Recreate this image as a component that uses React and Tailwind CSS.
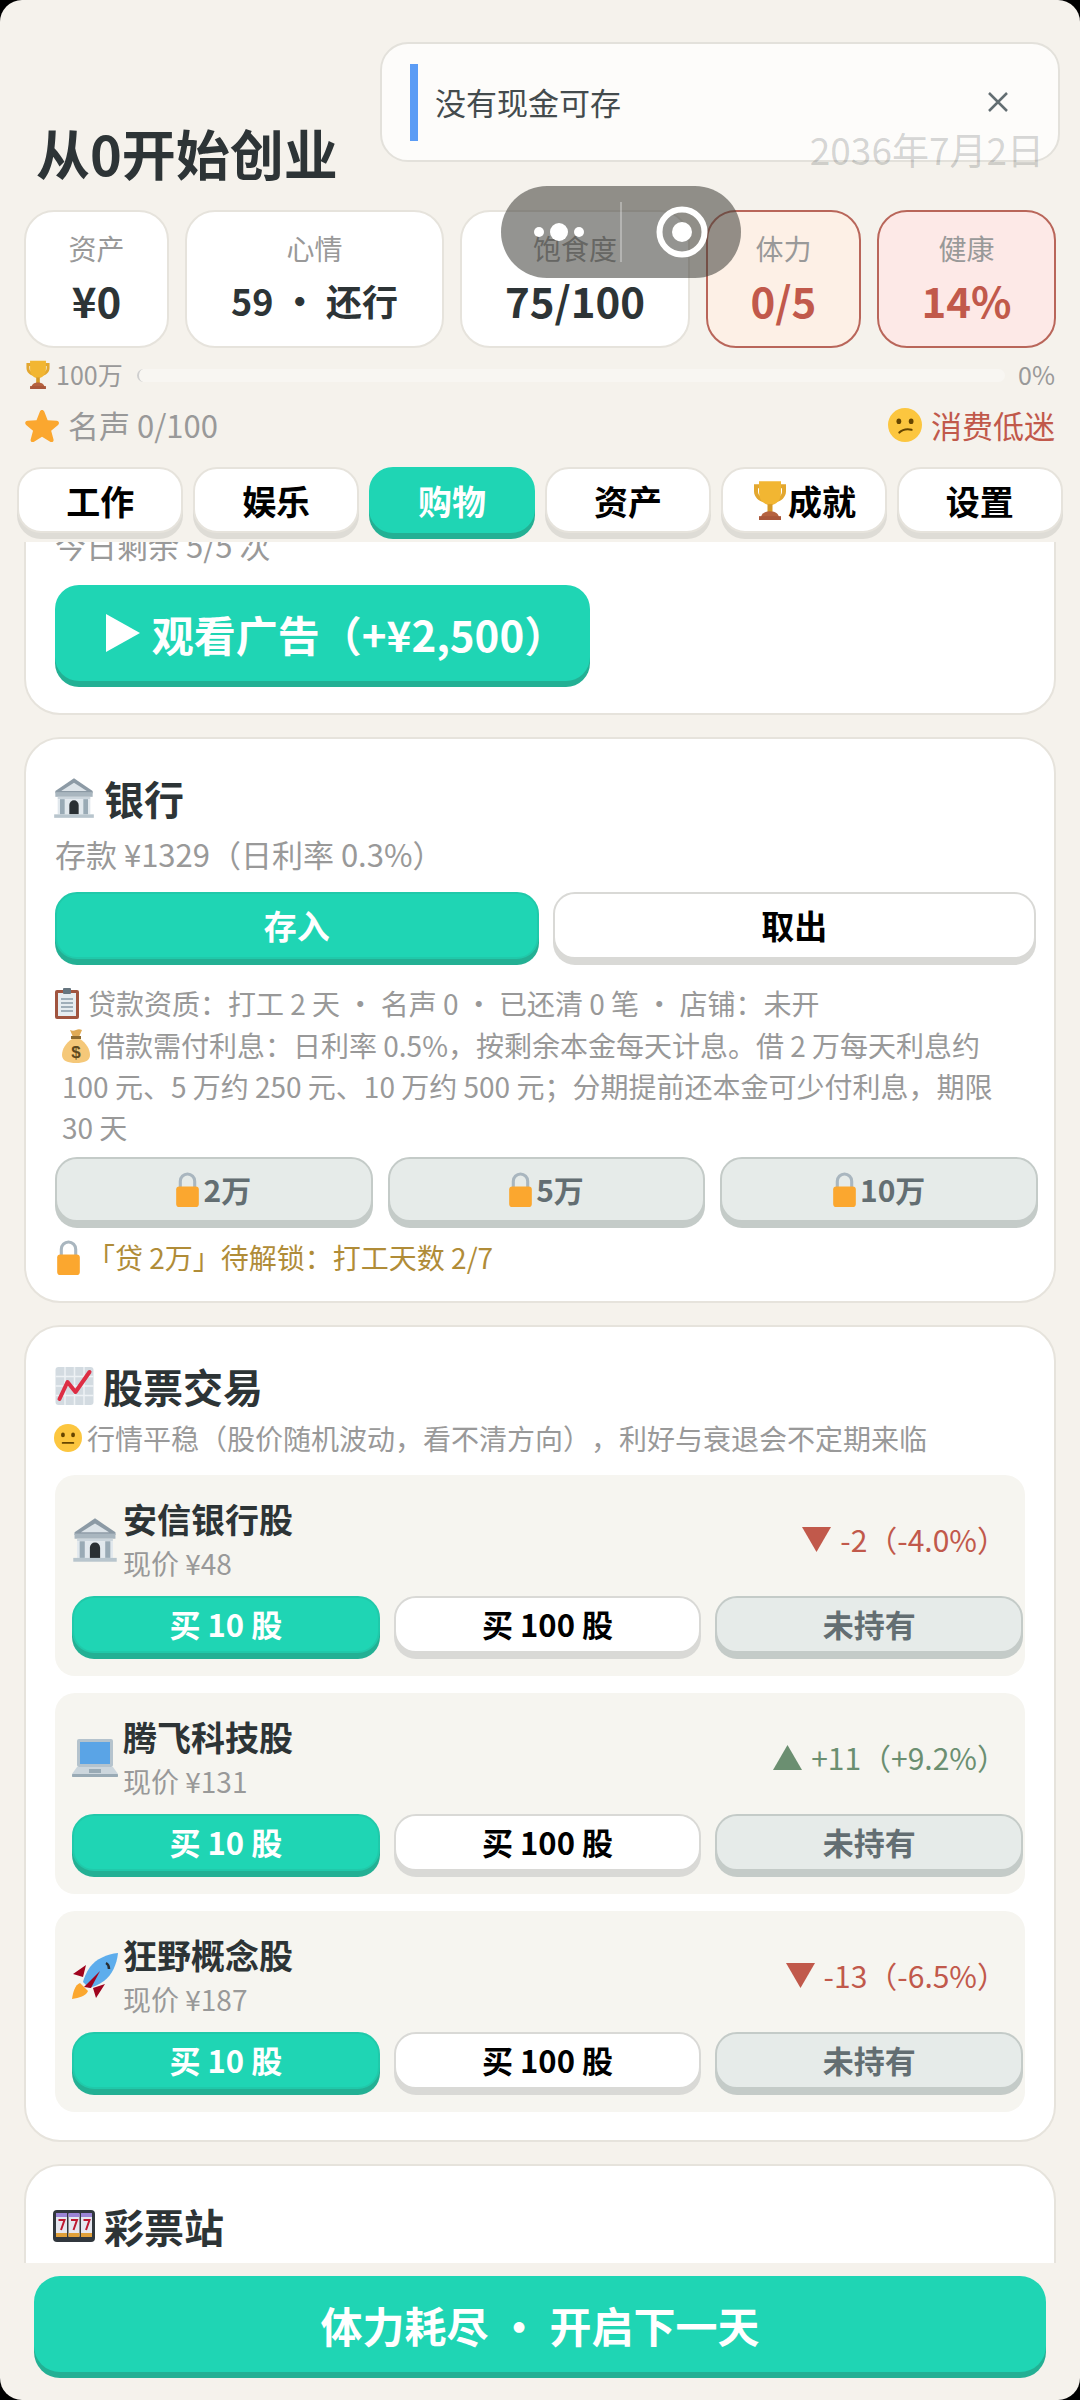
import React from 'react';

const Trophy = ({ s = 26 }) => (
    <svg width={s} height={s * 1.12} viewBox="0 0 36 40" className="shrink-0">
        <path d="M8 4H2v7c0 6 5 10 10 11l1-4c-4-1-7-3-7-7V8h3zM28 4h6v7c0 6-5 10-10 11l-1-4c4-1 7-3 7-7V8h-3z" fill="#e3a72f" />
        <path d="M7 1h22v11c0 8-5 13-11 13S7 20 7 12z" fill="#f2b632" />
        <rect x="15.500" y="24" width="5" height="8" fill="#d69a26" />
        <path d="M9 38c0-4 3-7 9-7s9 3 9 7z" fill="#b5623f" />
        <rect x="7" y="36" width="22" height="4" fill="#a9573a" />
    </svg>
);

const Star = () => (
    <svg width="34" height="34" viewBox="0 0 36 36" className="shrink-0">
        <path d="M18 2c1 0 2 .7 2.500 2l3.500 9 9.500.6c2.500.2 3.300 2.700 1.500 4.300l-7.300 6.100 2.500 9.300c.6 2.300-1.600 3.800-3.600 2.500L18 30.500l-8.400 5.300c-2 1.300-4.200-.2-3.600-2.500l2.500-9.300L1.200 17.900C-.6 16.300.2 13.800 2.700 13.600l9.500-.6 3.500-9C16.100 2.700 17 2 18 2z" fill="#fba72f" />
    </svg>
);

const Face = ({ s = 34, confused }) => (
    <svg width={s} height={s} viewBox="0 0 36 36" className="shrink-0">
        <circle cx="18" cy="18" r="18" fill="#fcc63f" />
        <ellipse cx="11.500" cy="14" rx="2.500" ry="3" fill="#664500" />
        <ellipse cx="24.500" cy="14" rx="2.500" ry="3" fill="#664500" />
        {confused
            ? <path d="M12 26c3-3 8-4 13-3" stroke="#664500" strokeWidth="2.200" fill="none" strokeLinecap="round" />
            : <rect x="10" y="23" width="16" height="2.500" rx="1.200" fill="#664500" />}
    </svg>
);

const Bank = ({ s = 42 }) => (
    <svg width={s} height={s} viewBox="0 0 36 36" className="shrink-0">
        <path d="M18 1 2 12v2h32v-2z" fill="#8c9aa5" />
        <path d="M18 5 7 12h22z" fill="#dde4e9" />
        <rect x="2" y="13" width="32" height="4" fill="#a9b6bf" />
        <rect x="4" y="17" width="28" height="2" fill="#ccd6dd" />
        <rect x="4" y="19" width="28" height="13" fill="#e1e8ed" />
        <rect x="6" y="19" width="4" height="13" fill="#99aab5" />
        <rect x="26" y="19" width="4" height="13" fill="#99aab5" />
        <path d="M14 32v-8a4 4 0 0 1 8 0v8z" fill="#292f33" />
        <rect x="1" y="32" width="34" height="3" fill="#b8c5cd" />
    </svg>
);

const Clipboard = () => (
    <svg width="24" height="32" viewBox="0 0 24 32" className="shrink-0">
        <rect x="0" y="3" width="24" height="29" rx="2" fill="#a0543f" />
        <rect x="3" y="6" width="18" height="23" fill="#e6ecf0" />
        <rect x="8" y="1" width="8" height="6" rx="1" fill="#66757f" />
        <path d="M6 12h12M6 16h12M6 20h12M6 24h12" stroke="#8899a6" strokeWidth="1.400" />
    </svg>
);

const Bag = () => (
    <svg width="28" height="34" viewBox="0 0 28 34" className="shrink-0">
        <path d="M8 1c2 1 4 1 6 0s4-1 6 0l-3 7h-6z" fill="#e0aa55" />
        <rect x="9" y="7" width="10" height="3" fill="#8d6a2f" />
        <path d="M10 10C4 14 0 20 0 26c0 6 6 8 14 8s14-2 14-8c0-6-4-12-10-16z" fill="#f5c879" />
        <text x="14" y="29" textAnchor="middle" fontSize="17" fontWeight="700" fill="#5f4a1e" fontFamily="Liberation Sans">$</text>
    </svg>
);

const Chart = () => (
    <svg width="39" height="38" viewBox="0 0 38 38" className="shrink-0">
        <rect width="38" height="38" rx="3" fill="#d3dbe1" />
        <path d="M9.500 0v38M19 0v38M28.500 0v38M0 9.500h38M0 19h38M0 28.500h38" stroke="#eef2f5" strokeWidth="1.500" />
        <path d="M4 32 12 15l8 10L34 5" stroke="#dd2e44" strokeWidth="4" fill="none" strokeLinecap="round" strokeLinejoin="round" />
    </svg>
);

const Lock = ({ w = 23, h = 35 }) => (
    <svg width={w} height={h} viewBox="0 0 22 34" className="shrink-0">
        <path d="M4 16V9a7 7 0 0 1 14 0v7" stroke="#a9b6bf" strokeWidth="3" fill="none" />
        <rect x="0" y="14" width="22" height="20" rx="3" fill="#fba72f" />
    </svg>
);

const Laptop = () => (
    <svg width="46" height="38" viewBox="0 0 46 38">
        <rect x="5" y="0" width="36" height="28" rx="2" fill="#b5c3cd" />
        <rect x="8" y="3" width="30" height="22" fill="#5aa4e6" />
        <path d="M5 28h36l5 7v3H0v-3z" fill="#ccd6dd" />
        <rect x="0" y="35" width="46" height="3" rx="1" fill="#99aab5" />
        <rect x="17" y="30" width="12" height="4" fill="#99aab5" />
    </svg>
);

const Rocket = () => (
    <svg width="46" height="46" viewBox="0 0 46 46">
        <path d="M8 30c-5 2-7 9-8 16 7-1 14-3 16-8z" fill="#fba72f" />
        <path d="M14 12 1 21l10 3zM33 31l-9 14-3-10z" fill="#a0041e" />
        <path d="M46 0c-11 1-22 6-28 14-4 6-6 11-7 15l6 6c4-1 9-3 15-7C40 22 45 11 46 0z" fill="#5dadec" />
        <path d="M12 34 28 18l-9 17z" fill="#a0041e" />
        <path d="M34 10c2 1 3 3 3 6" stroke="#292f33" strokeWidth="2.500" fill="none" />
    </svg>
);

const Slot = () => (
    <svg width="42" height="32" viewBox="0 0 42 32" className="shrink-0">
        <rect width="42" height="32" rx="4" fill="#31373d" />
        {[3, 15.500, 28].map((x) => (
            <g key={x}>
                <rect x={x} y="3" width="11" height="24" rx="1.500" fill="#e6e7f0" />
                <rect x={x} y="3" width="11" height="4" fill="#9b84d6" />
                <rect x={x} y="23" width="11" height="4" fill="#e0a03a" />
                <path d={`M${x + 2.500} 10h6l-3.500 10`} stroke="#be1931" strokeWidth="2" fill="none" />
            </g>
        ))}
    </svg>
);

const Stat = ({ label, value, w, warn, danger, small }) => (
    <div className={`${w} h-[138px] shrink-0 rounded-[30px] border-2 flex flex-col items-center ${warn ? 'bg-[#fdf0e6] border-[#b9665a]' : danger ? 'bg-[#fde9e7] border-[#b9665a]' : 'bg-white border-[#e6e3dc]'}`}>
        <span className="mt-[16px] text-[28px] leading-[40px] text-[#999999]">{label}</span>
        <span className={`mt-[4px] leading-[56px] font-bold ${small ? 'text-[36px]' : 'text-[42px]'} ${warn || danger ? 'text-[#c1594b]' : 'text-[#2d3436]'}`}>{value}</span>
    </div>
);

const Tab = ({ children, active }) => (
    <div className={`flex-1 basis-0 min-w-0 h-[66px] rounded-[24px] border-2 flex items-center justify-center text-[34px] font-bold ${active ? 'bg-[#1fd5b4] text-white border-[#1fd5b4] shadow-[0_6px_0_#23b094]' : 'bg-white text-black border-[#e6e3dc] shadow-[0_6px_0_#dedcd6]'}`}>
        {children}
    </div>
);

const Btn = ({ kind, children, className = 'text-[31px]' }) => {
    const look = kind === 'teal'
        ? 'bg-[#1fd5b4] text-white border-[#20c9aa] shadow-[0_6px_0_#23b094]'
        : kind === 'white'
            ? 'bg-white text-black border-[#d9d9d6] shadow-[0_6px_0_#d9d9d6]'
            : 'bg-[#e6ebe9] text-[#636e72] border-[#c4cbc8] shadow-[0_6px_0_#c4cbc8]';
    return (
        <div className={`flex-1 basis-0 rounded-[22px] border-2 flex items-center justify-center font-bold ${look} ${className}`}>
            {children}
        </div>
    );
};

const Stock = ({ icon, name, price, change, up }) => (
    <div className="h-[201px] rounded-[20px] bg-[#f6f5f0] pl-[17px]">
        <div className="h-[121px] pt-[8px] flex items-center">
            <div className="w-[51px] shrink-0">{icon}</div>
            <div className="flex-1">
                <div className="text-[34px] leading-[46px] font-bold text-[#2d3436]">{name}</div>
                <div className="text-[28px] leading-[42px] text-[#999999]">{price}</div>
            </div>
            <div className={`mr-[18px] flex items-center gap-[9px] text-[30px] ${up ? 'text-[#6b8f71]' : 'text-[#c1594b]'}`}>
                <svg width="29" height="25" viewBox="0 0 29 25">
                    <polygon points={up ? '14.500,0 29,25 0,25' : '0,0 29,0 14.500,25'} fill="currentColor" />
                </svg>
                {change}
            </div>
        </div>
        <div className="flex gap-[14px] w-[951px] h-[57px]">
            <Btn kind="teal">买 10 股</Btn>
            <Btn kind="white">买 100 股</Btn>
            <Btn kind="gray">未持有</Btn>
        </div>
    </div>
);

const Card = ({ children, className = '' }) => (
    <div className={`shrink-0 rounded-[36px] bg-white border-2 border-[#e6e3dc] px-[29px] ${className}`}>{children}</div>
);

const CardTitle = ({ icon, children, className = '' }) => (
    <div className={`flex items-center gap-[9px] text-[40px] leading-[52px] font-bold text-[#2d3436] ${className}`}>
        {icon}
        {children}
    </div>
);

export default function App() {
    return (
        <div className="relative w-[1080px] h-[2400px] bg-black overflow-hidden font-['Noto_Sans_CJK_SC','Noto_Sans',sans-serif] [text-spacing-trim:space-all]">
            <div className="relative h-full rounded-[22px] bg-[#f5f2ec] flex flex-col overflow-hidden">
                {/* Header */}
                <div className="shrink-0 h-[210px] pl-[36px] pr-[37px] pt-[116px] flex justify-between items-start">
                    <h1 className="text-[54px] leading-[74px] font-bold text-[#2d3436]">从0开始创业</h1>
                </div>

                <div className="shrink-0 flex gap-[16px] px-[24px]">
                    <Stat label="资产" value="¥0" w="w-[145px]" />
                    <Stat label="心情" value="59 · 还行" w="w-[259px]" small />
                    <Stat label="饱食度" value="75/100" w="w-[230px]" />
                    <Stat label="体力" value="0/5" w="w-[155px]" warn />
                    <Stat label="健康" value="14%" w="w-[179px]" danger />
                </div>

                <div className="shrink-0 h-[36px] mt-[9px] px-[25px] flex items-center text-[25px] text-[#999999]">
                    <Trophy />
                    <span className="ml-[5px] w-[81px]">100万</span>
                    <div className="flex-1 h-[13px] rounded-full bg-[#f8f6f2] border-l-2 border-[#cfcfcf]" />
                    <span className="ml-[13px]">0%</span>
                </div>

                <div className="shrink-0 h-[50px] mt-[7px] px-[25px] flex items-center justify-between text-[31px]">
                    <div className="flex items-center gap-[9px] text-[#999999]"><Star />名声 0/100</div>
                    <div className="flex items-center gap-[9px] text-[#c1594b]"><Face confused />消费低迷</div>
                </div>

                <div className="shrink-0 h-[75px] mt-[17px] px-[17px] flex gap-[9.500px]">
                    <Tab>工作</Tab>
                    <Tab>娱乐</Tab>
                    <Tab active>购物</Tab>
                    <Tab>资产</Tab>
                    <Tab><Trophy s={36} />成就</Tab>
                    <Tab>设置</Tab>
                </div>

                {/* Scroll area */}
                <div className="shrink-0 h-[1721px] overflow-hidden px-[24px] flex flex-col gap-[22px]">
                    <Card className="-mt-[60px] h-[233px] pt-[40px]">
                        <div className="text-[31px] leading-[42px] text-[#999999]">今日剩余 5/5 次</div>
                        <div className="mt-[19px] w-[535px] h-[96px] pl-[27px] rounded-[24px] bg-[#1fd5b4] shadow-[0_6px_0_#23b094] flex items-center justify-center gap-[12px] text-[42px] font-bold text-white">
                            <svg width="34" height="38" viewBox="0 0 34 38"><polygon points="0,0 34,19 0,38" fill="#fff" /></svg>
                            观看广告（+¥2,500）
                        </div>
                    </Card>

                    <Card className="h-[566px] pt-[33px]">
                        <CardTitle icon={<Bank />} className="-ml-[2px]">银行</CardTitle>
                        <div className="mt-[8px] text-[31px] leading-[44px] text-[#999999]">存款 ¥1329（日利率 0.3%）</div>
                        <div className="mt-[16px] flex gap-[14px] w-[981px] h-[67px]">
                            <Btn kind="teal" className="text-[33px]">存入</Btn>
                            <Btn kind="white" className="text-[33px]">取出</Btn>
                        </div>
                        <div className="mt-[23px] text-[28px] leading-[42px] text-[#999999] flex items-center gap-[9px]"><Clipboard />贷款资质：打工 2 天 · 名声 0 · 已还清 0 笔 · 店铺：未开</div>
                        <div className="mt-[1px] pl-[7px] w-[960px] text-[28px] leading-[41px] text-[#999999]">
                            <span className="inline-block align-[-6px] mr-[7px]"><Bag /></span>
                            借款需付利息：日利率 0.5%，按剩余本金每天计息。借 2 万每天利息约 100 元、5 万约 250 元、10 万约 500 元；分期提前还本金可少付利息，期限 30 天
                        </div>
                        <div className="mt-[9px] flex gap-[15px] w-[983px] h-[65px]">
                            {['2万', '5万', '10万'].map((t) => (
                                <Btn key={t} kind="gray" className="text-[30px] gap-[4px]"><Lock />{t}</Btn>
                            ))}
                        </div>
                        <div className="mt-[14px] flex items-center text-[28px] leading-[42px] text-[#b08c38]"><span className="ml-[2px] mr-[7px]"><Lock /></span>「贷 2万」待解锁：打工天数 2/7</div>
                    </Card>

                    <Card className="h-[817px] pt-[33px]">
                        <CardTitle icon={<Chart />}>股票交易</CardTitle>
                        <div className="mt-[5px] -ml-[1px] flex items-center gap-[5px] text-[28px] leading-[42px] text-[#999999]"><Face s={28} />行情平稳（股价随机波动，看不清方向），利好与衰退会不定期来临</div>
                        <div className="mt-[16px] flex flex-col gap-[17px] w-[970px]">
                            <Stock icon={<Bank s={46} />} name="安信银行股" price="现价 ¥48" change="-2（-4.0%）" />
                            <Stock icon={<Laptop />} name="腾飞科技股" price="现价 ¥131" change="+11（+9.2%）" up />
                            <Stock icon={<Rocket />} name="狂野概念股" price="现价 ¥187" change="-13（-6.5%）" />
                        </div>
                    </Card>

                    <Card className="h-[300px] pt-[34px]">
                        <CardTitle icon={<Slot />} className="-ml-[2px]">彩票站</CardTitle>
                    </Card>
                </div>

                {/* Next day */}
                <div className="flex-1 px-[34px] pt-[13px]">
                    <div className="h-[96px] rounded-[26px] bg-[#1fd5b4] shadow-[0_6px_0_#23b094] flex items-center justify-center text-[42px] font-bold text-white">
                        体力耗尽 · 开启下一天
                    </div>
                </div>

                {/* Toast */}
                <div className="absolute left-[380px] top-[42px] w-[680px] h-[120px] rounded-[28px] bg-[#fdfcfa] border-2 border-[#e3e1db] flex items-center pl-[28px] pr-[49px]">
                    <div className="w-[8px] h-[77px] bg-[#5b9cf5]" />
                    <span className="ml-[17px] flex-1 text-[31px] text-[#444b4d]">没有现金可存</span>
                    <svg width="22" height="22" viewBox="0 0 22 22"><path d="M2 2l18 18M20 2 2 20" stroke="#636e72" strokeWidth="2.500" /></svg>
                </div>
                <span className="absolute right-[36px] top-[124px] text-[37px] leading-[50px] text-[#2d3436]/20">2036年7月2日</span>

                {/* Capsule */}
                <div className="absolute left-[501px] top-[186px] w-[240px] h-[92px] rounded-full bg-[#3c3c37]/55">
                    <svg width="240" height="92" viewBox="0 0 240 92">
                        <circle cx="38" cy="46" r="5" fill="#fff" />
                        <circle cx="58" cy="46" r="9" fill="#fff" />
                        <circle cx="78" cy="46" r="5" fill="#fff" />
                        <path d="M120 16v60" stroke="#fff" strokeOpacity=".3" strokeWidth="2" />
                        <circle cx="181" cy="46" r="22.500" fill="none" stroke="#fff" strokeWidth="6" />
                        <circle cx="181" cy="46" r="10" fill="#fff" />
                    </svg>
                </div>
            </div>
        </div>
    );
}
